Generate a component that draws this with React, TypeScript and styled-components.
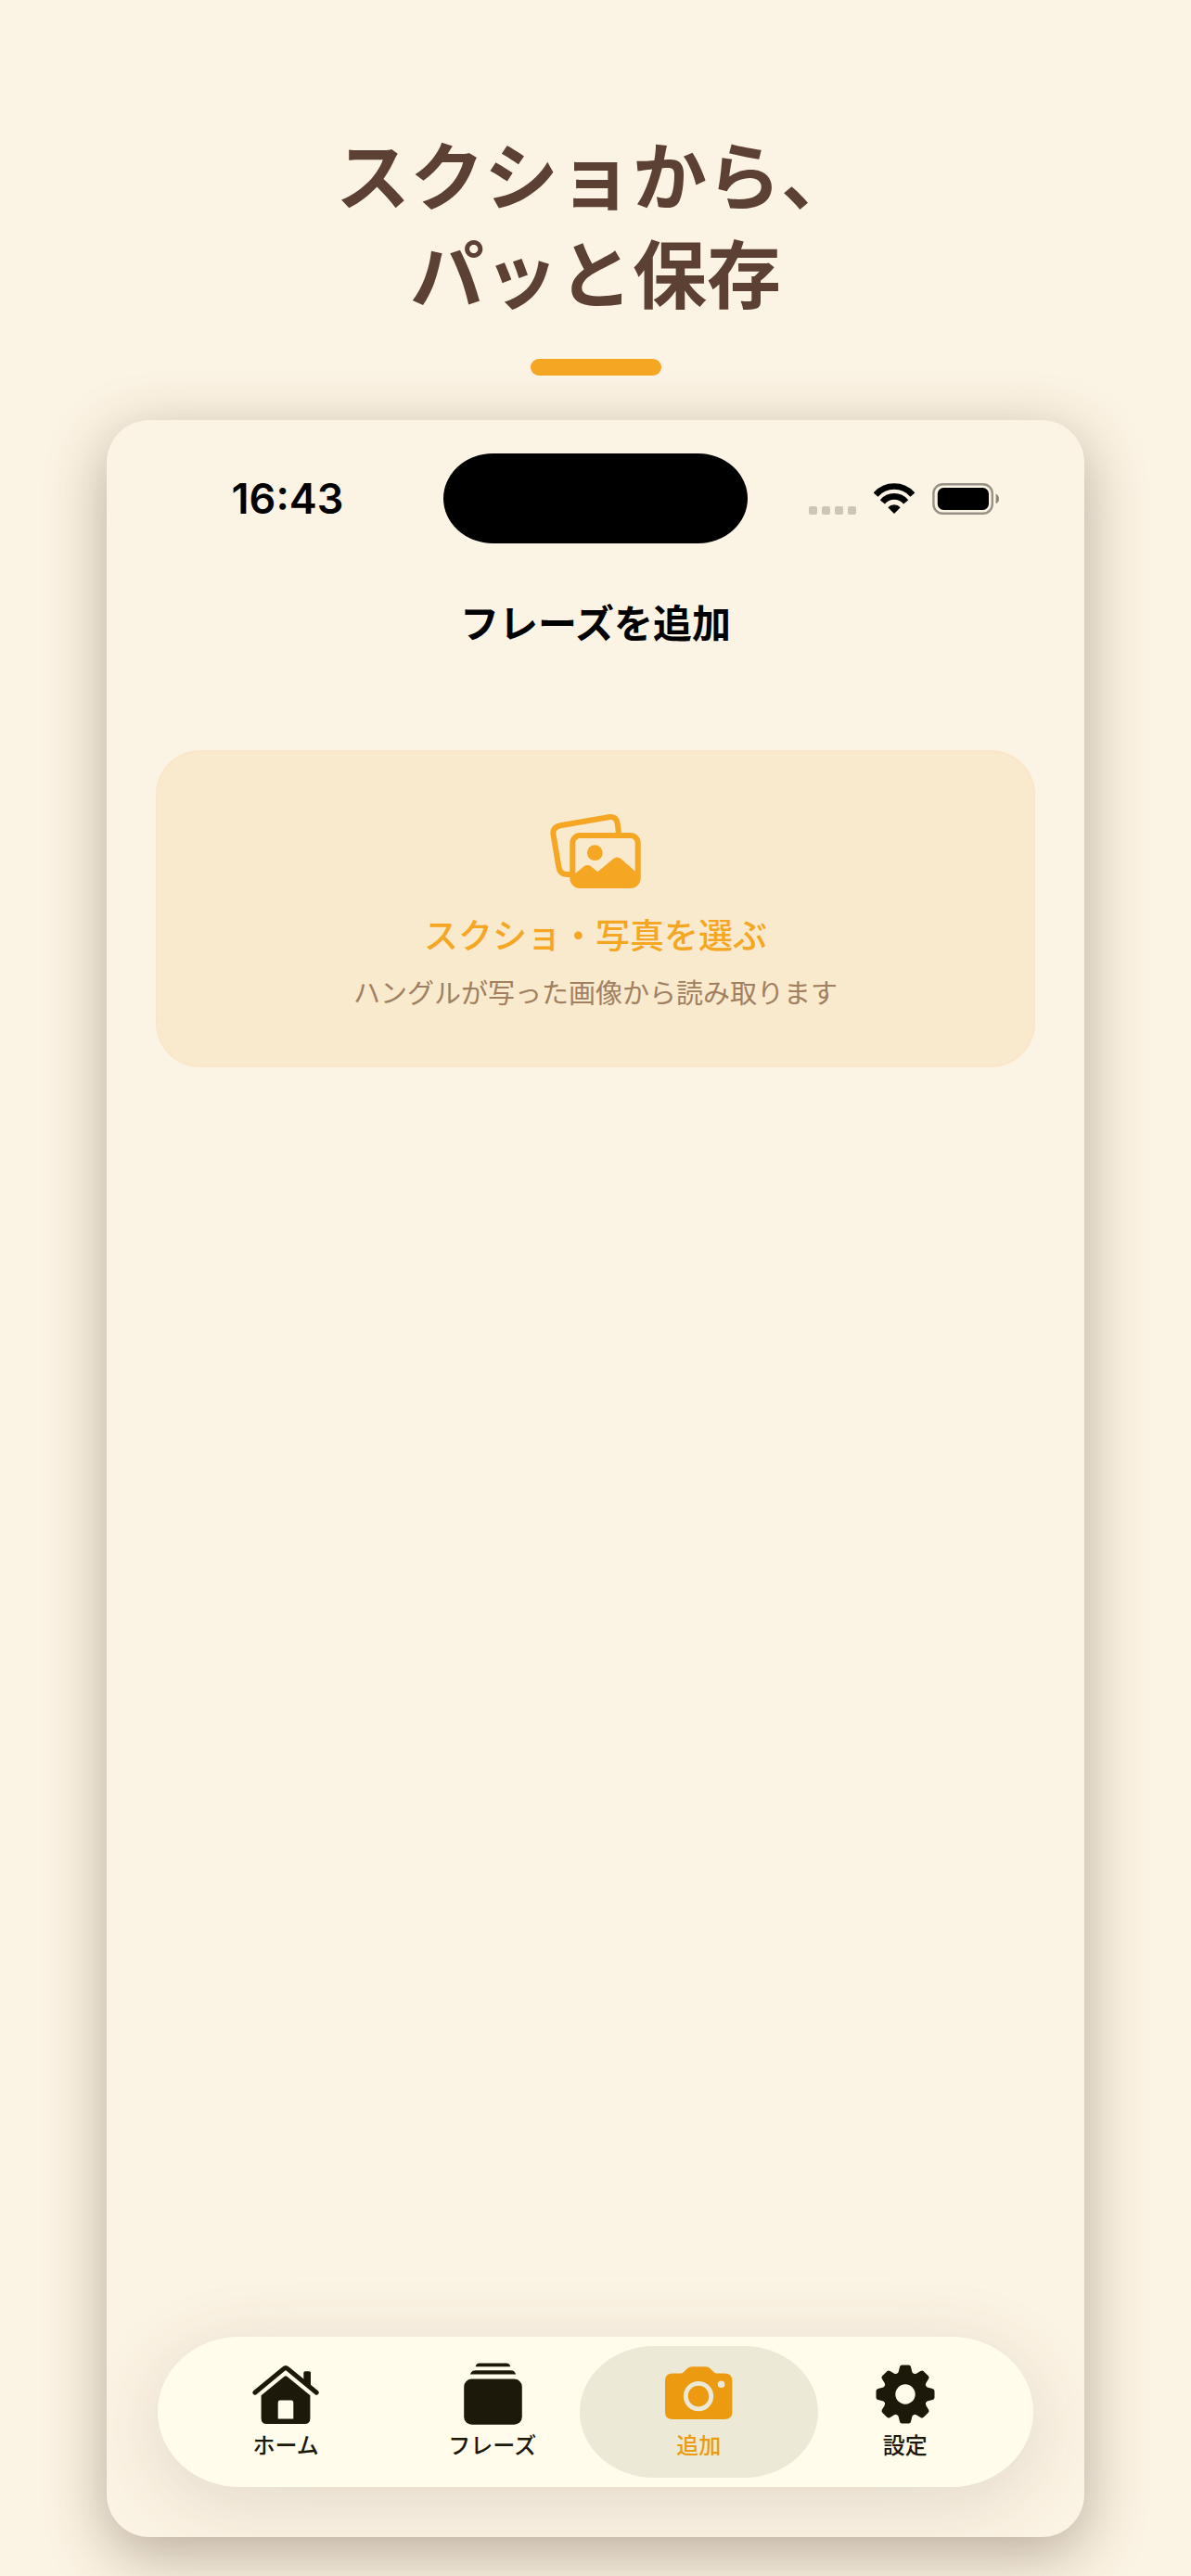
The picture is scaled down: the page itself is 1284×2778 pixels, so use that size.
import React from "react";
import styled, { createGlobalStyle } from "styled-components";

const color = {
  page: "#fbf3e3",
  heading: "#5c4033",
  accent: "#f5a623",
  card: "#f9e9cd",
  cardEdge: "#fae6ca",
  muted: "#a08060",
  bar: "#fffceb",
  pill: "#ede9d7",
  ink: "#1c190a",
  active: "#ec9b10",
};

const GlobalStyle = createGlobalStyle`
  *, *::before, *::after { box-sizing: border-box; }
  body {
    margin: 0;
    background: ${color.page};
    font-family: Inter, "Noto Sans CJK JP", sans-serif;
  }
  button { font: inherit; border: 0; background: none; padding: 0; cursor: pointer; }
  svg { display: block; }
`;

const Page = styled.div`
  min-height: 100vh;
  display: flex;
  flex-direction: column;
  align-items: center;
  padding: 132px 0 42px;
  overflow: hidden;
`;

const Headline = styled.h1`
  margin: 0;
  color: ${color.heading};
  font-family: "Noto Sans CJK JP", sans-serif;
  font-size: 80px;
  line-height: 106px;
  font-weight: 700;
  text-align: center;
`;

const Underline = styled.div`
  width: 141px;
  height: 18px;
  margin: 43px 0 48px;
  border-radius: 9px;
  background: ${color.accent};
`;

const Device = styled.section`
  flex: 1;
  width: 82.1%;
  display: flex;
  flex-direction: column;
  border-radius: 46px;
  background: ${color.page};
  box-shadow: 0 18px 64px rgba(88, 64, 50, 0.4);
  overflow: hidden;
`;

const StatusBar = styled.div`
  display: grid;
  grid-template-columns: 1fr 328px 1fr;
  align-items: center;
  justify-items: center;
  padding: 36px 27px 0;
`;

const Clock = styled.time`
  font-size: 45px;
  line-height: 48px;
  font-weight: 600;
  color: #000;
`;

const Island = styled.div`
  width: 100%;
  height: 97px;
  border-radius: 54px / 49px;
  background: #000;
`;

const Indicators = styled.div`
  display: flex;
  align-items: center;
  gap: 19px;
`;

const Signal = styled.div`
  display: flex;
  gap: 5px;
  align-self: flex-end;
`;

const Dot = styled.i`
  width: 9px;
  height: 9px;
  border-radius: 2px;
  background: #cdc5b8;
`;

const ScreenTitle = styled.h2`
  margin: 63px 0 0;
  font-size: 42px;
  line-height: 48px;
  font-weight: 700;
  color: #000;
  text-align: center;
`;

const Content = styled.main`
  flex: 1;
  padding: 112px 53px 0;
`;

const PickCard = styled.button`
  width: 100%;
  display: flex;
  flex-direction: column;
  align-items: center;
  && {
    padding: 65px 24px 57px;
    border-radius: 48px;
    background: ${color.card};
    border: 2px solid ${color.cardEdge};
  }
`;

const PickTitle = styled.span`
  margin-top: 28px;
  font-size: 37px;
  line-height: 48px;
  font-weight: 500;
  color: ${color.accent};
`;

const PickHint = styled.span`
  margin-top: 18px;
  font-size: 29px;
  line-height: 40px;
  color: ${color.muted};
`;

const TabBar = styled.nav`
  display: flex;
  margin: 0 55px 54px;
  padding: 10px 27px;
  border-radius: 88px / 81px;
  background: ${color.bar};
  box-shadow: 0 16px 80px rgba(84, 66, 58, 0.15);
`;

const Tab = styled.button<{ $active: boolean }>`
  position: relative;
  flex: 1;
  height: 142px;
  display: flex;
  flex-direction: column;
  align-items: center;
  && {
    padding-top: 18px;
    color: ${(p) => (p.$active ? color.active : color.ink)};
  }
  &::before {
    content: "";
    position: absolute;
    inset: 0 -17px;
    border-radius: 80px / 71px;
    background: ${(p) => (p.$active ? color.pill : "transparent")};
  }
  > * { position: relative; }
`;

const TabLabel = styled.span`
  margin-top: 6px;
  font-size: 24px;
  line-height: 32px;
  font-weight: 500;
`;

const WifiIcon = () => (
  <svg width="44" height="33" viewBox="0 0 44 33" fill="none" stroke="#000" strokeWidth="6.6" aria-hidden="true">
    <path d="M2.1 12.5A26.5 26.5 0 0 1 41.9 12.5" />
    <path d="M9.3 20.3A16.6 16.6 0 0 1 34.7 20.3" />
    <path d="M22 33 15.3 26.3A9 9 0 0 1 28.7 26.3Z" fill="#000" stroke="none" />
  </svg>
);

const BatteryIcon = () => (
  <svg width="72" height="34" viewBox="0 0 72 34" aria-hidden="true">
    <rect x="1.4" y="1.2" width="63.4" height="31.6" rx="10" fill="none" stroke="#989186" strokeWidth="2.4" />
    <rect x="5.8" y="5" width="55.2" height="24" rx="6.5" fill="#000" />
    <path d="M68.6 11.6C71 12.6 72 14.6 72 16.9S71 21.2 68.6 22.2Z" fill="#8b857a" />
  </svg>
);

const PhotosIcon = () => (
  <svg width="98" height="82" viewBox="0 0 98 82" fill="none" stroke={color.accent} strokeWidth="6" aria-hidden="true">
    <path d="M74 23 72.7 12.5Q71.5 4.2 64.5 5L11 14.2Q2.7 16 3.4 23.3L9.3 58.5Q10.7 67.2 18 67H23" />
    <rect x="24.3" y="25" width="70.4" height="54" rx="8" />
    <circle cx="48.3" cy="43.7" r="8.4" fill={color.accent} stroke="none" />
    <path
      d="M26 67 36.5 58.3Q40.3 55.5 44 58.3L51.3 64.3 68.3 50Q72.3 47 76.3 50L93 64.8V74Q93 80 87 80H32Q26 80 26 74Z"
      fill={color.accent}
      stroke="none"
    />
  </svg>
);

const tabIcon = { width: 74, height: 68, viewBox: "0 0 74 68", fill: "currentColor", "aria-hidden": true };

const HomeIcon = () => (
  <svg {...tabIcon}>
    <path d="M3.8 32.2 34.8 6.6Q37 4.7 39.2 6.6L70.3 32.2" fill="none" stroke="currentColor" strokeWidth="5" strokeLinecap="round" />
    <path d="M56.3 19V11Q56.3 9.3 58 9.3H62.3Q64 9.3 64 11V27Z" />
    <path
      fillRule="evenodd"
      d="M35.6 14.8Q37 13.6 38.4 14.8L63.4 35.2V60Q63.4 66 57.4 66H16.6Q10.6 66 10.6 60V35.2ZM31 40.6Q28.7 40.6 28.7 42.9V60.4H45.3V42.9Q45.3 40.6 43 40.6Z"
    />
  </svg>
);

const StackIcon = () => (
  <svg {...tabIcon}>
    <path d="M18.7 4.2Q19.3 .6 23 .6H52Q55.5 .6 56.2 4.2Z" />
    <path d="M12.9 12.6Q14 8.3 18.5 8.3H56.5Q61 8.3 62.1 12.6Z" />
    <rect x="6.2" y="17.6" width="62.6" height="49.2" rx="8.5" />
  </svg>
);

const CameraIcon = () => (
  <svg {...tabIcon}>
    <path
      fillRule="evenodd"
      d="M9 11.5H17.5Q19.5 11.5 21 10L25.5 5.7Q27.5 4.2 30 4.2H44.5Q47 4.2 49 5.7L53.5 10Q55 11.5 57 11.5H65Q73.4 11.5 73.4 19.5V53Q73.4 61 65 61H9Q1 61 1 53V19.5Q1 11.5 9 11.5ZM37 19.9A16.2 16.2 0 1 0 37 52.3A16.2 16.2 0 1 0 37 19.9ZM61.6 19.5A3.8 3.8 0 1 0 61.6 27.1A3.8 3.8 0 1 0 61.6 19.5Z"
    />
    <circle cx="37" cy="36.1" r="11.3" />
  </svg>
);

const GearIcon = () => (
  <svg {...tabIcon}>
    <g transform="translate(37 34)">
      <circle r="17.3" fill="none" stroke="currentColor" strokeWidth="13.2" />
      {Array.from({ length: 8 }, (_, i) => (
        <path
          key={i}
          transform={`rotate(${i * 45})`}
          d="M-9.8-21.5Q-7.6-22.5-7.2-24.5L-6.1-29.3Q-5.6-31.5-3.6-31.5H3.6Q5.6-31.5 6.1-29.3L7.2-24.5Q7.6-22.5 9.8-21.5Z"
        />
      ))}
    </g>
  </svg>
);

const tabs = [
  { label: "ホーム", Icon: HomeIcon, active: false },
  { label: "フレーズ", Icon: StackIcon, active: false },
  { label: "追加", Icon: CameraIcon, active: true },
  { label: "設定", Icon: GearIcon, active: false },
];

export default function App() {
  return (
    <Page lang="ja">
      <GlobalStyle />
      <Headline>
        スクショから、
        <br />
        パッと保存
      </Headline>
      <Underline />
      <Device>
        <StatusBar>
          <Clock>16:43</Clock>
          <Island />
          <Indicators>
            <Signal>
              {[0, 1, 2, 3].map((n) => (
                <Dot key={n} />
              ))}
            </Signal>
            <WifiIcon />
            <BatteryIcon />
          </Indicators>
        </StatusBar>
        <ScreenTitle>フレーズを追加</ScreenTitle>
        <Content>
          <PickCard type="button">
            <PhotosIcon />
            <PickTitle>スクショ・写真を選ぶ</PickTitle>
            <PickHint>ハングルが写った画像から読み取ります</PickHint>
          </PickCard>
        </Content>
        <TabBar>
          {tabs.map(({ label, Icon, active }) => (
            <Tab key={label} type="button" $active={active} aria-current={active ? "page" : undefined}>
              <Icon />
              <TabLabel>{label}</TabLabel>
            </Tab>
          ))}
        </TabBar>
      </Device>
    </Page>
  );
}
